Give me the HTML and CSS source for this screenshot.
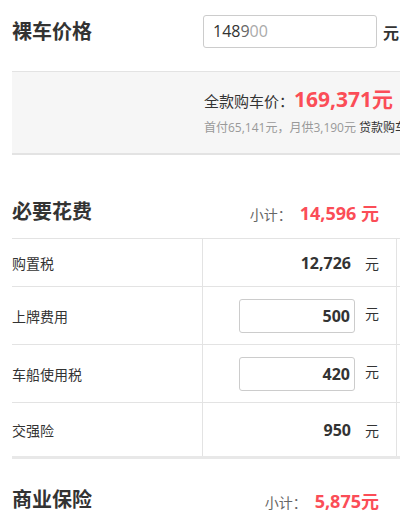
FILE: index.html
```html
<!DOCTYPE html>
<html lang="zh-CN">
<head>
    <meta charset="UTF-8">
    <meta name="viewport" content="width=device-width, initial-scale=1.0">
    <title>购车计算器</title>
    <link rel="stylesheet" href="styles.css">
</head>
<body>
    <div class="page">
        <div class="price-row">
            <h2 class="title">裸车价格</h2>
            <div class="price-input"><span>148</span><span class="fade1">9</span><span class="fade2">00</span></div>
            <span class="price-unit">元</span>
        </div>

        <div class="summary">
            <div class="total">全款购车价：<span class="red">169,371元</span></div>
            <div class="loan">首付65,141元，月供3,190元 <a class="loan-link">贷款购车</a></div>
        </div>

        <div class="section-head">
            <h2 class="title">必要花费</h2>
            <div class="subtotal">小计：<span class="red">14,596 元</span></div>
        </div>
        <table class="fees">
            <tr class="short">
                <td class="label">购置税</td>
                <td class="amount"><span class="value">12,726</span><span class="unit">元</span></td>
                <td></td>
            </tr>
            <tr>
                <td class="label">上牌费用</td>
                <td class="amount"><input class="fee-input" type="text" value="500"><span class="unit">元</span></td>
                <td></td>
            </tr>
            <tr>
                <td class="label">车船使用税</td>
                <td class="amount"><input class="fee-input" type="text" value="420"><span class="unit">元</span></td>
                <td></td>
            </tr>
            <tr class="last">
                <td class="label">交强险</td>
                <td class="amount"><span class="value">950</span><span class="unit">元</span></td>
                <td></td>
            </tr>
        </table>

        <div class="section-head second">
            <h2 class="title">商业保险</h2>
            <div class="subtotal">小计：<span class="red">5,875元</span></div>
        </div>
    </div>
</body>
</html>
```

FILE: styles.css
```css
body {
    margin: 0;
    overflow: hidden;
    font-family: "Open Sans", "Noto Sans CJK SC", sans-serif;
    color: #333;
}
.page {
    padding-left: 12px;
    width: 600px;
}
.title {
    margin: 0;
    font-size: 20px;
    line-height: 24px;
    font-weight: bold;
    color: #333;
}
.red {
    color: #fb4d57;
    font-weight: bold;
}

.price-row {
    display: flex;
    align-items: center;
    height: 71px;
    padding-bottom: 8px;
    box-sizing: border-box;
}
.price-row .title {
    width: 191px;
}
.price-input {
    width: 174px;
    height: 33px;
    box-sizing: border-box;
    border: 1px solid #ccc;
    border-radius: 3px;
    padding-left: 9px;
    font-size: 16px;
    line-height: 31px;
    color: #333;
}
.fade1 {
    color: #666;
}
.fade2 {
    color: #aaa;
}
.price-unit {
    margin-left: 6px;
    font-size: 16px;
    font-weight: bold;
}

.summary {
    height: 84px;
    box-sizing: border-box;
    background: #f6f6f6;
    border-top: 1px solid #e3e3e3;
    border-bottom: 2px solid #e3e3e3;
    padding: 13px 0 0 192px;
    white-space: nowrap;
}
.total {
    font-size: 15px;
    line-height: 28px;
}
.total .red {
    font-size: 21px;
}
.loan {
    margin-top: 5px;
    font-size: 12px;
    line-height: 16px;
    color: #999;
}
.loan-link {
    color: #333;
}

.section-head {
    display: flex;
    justify-content: space-between;
    align-items: center;
    width: 367px;
    padding: 44px 0 13px;
}
.subtotal {
    font-size: 14px;
    color: #666;
}
.subtotal .red {
    font-size: 18px;
    margin-left: 8px;
}
.section-head.second {
    padding-top: 28px;
}

.fees {
    border-collapse: collapse;
    width: 388px;
    border-top: 1px solid #e3e3e3;
}
.fees td {
    border-bottom: 1px solid #e3e3e3;
    padding: 0;
    height: 57px;
    font-size: 14px;
}
.fees tr.short td {
    height: 47px;
}
.fees tr.last td {
    height: 53px;
    border-bottom: 3px solid #e8e8e8;
}
.fees .label {
    width: 190px;
    border-right: 1px solid #e3e3e3;
}
.fees .amount {
    width: 193px;
    border-right: 1px solid #e3e3e3;
    text-align: right;
    white-space: nowrap;
}
.value {
    font-size: 16px;
    font-weight: bold;
    padding-right: 4px;
}
.unit {
    display: inline-block;
    width: 14px;
    margin: 0 17px 0 10px;
    text-align: left;
    color: #333;
}
.fee-input {
    width: 116px;
    height: 34px;
    box-sizing: border-box;
    border: 1px solid #ccc;
    border-radius: 3px;
    padding: 0 4px 0 0;
    text-align: right;
    font-family: "Open Sans", "Noto Sans CJK SC", sans-serif;
    font-size: 16px;
    font-weight: bold;
    color: #333;
    vertical-align: middle;
}
```
